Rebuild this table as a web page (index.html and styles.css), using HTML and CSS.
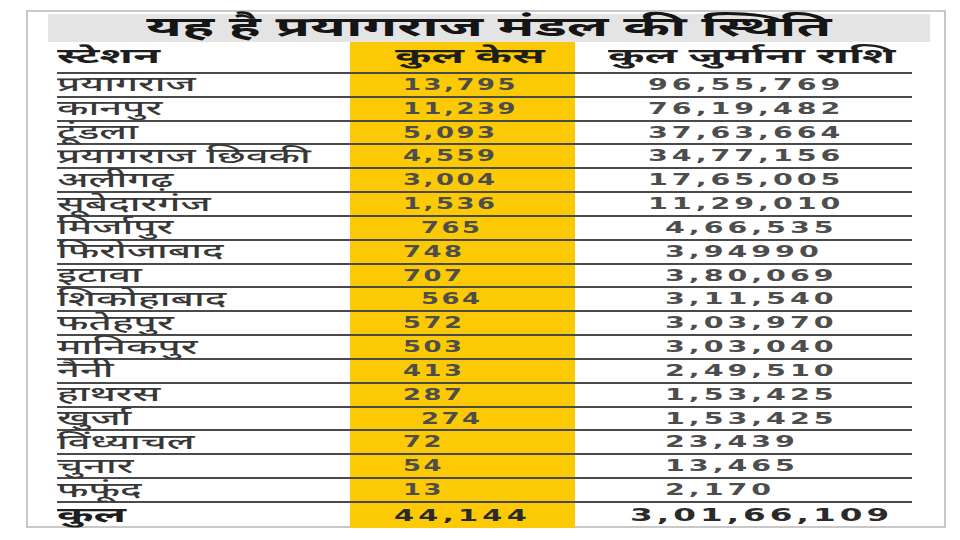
FILE: index.html
```html
<!DOCTYPE html>
<html lang="hi">
<head>
<meta charset="utf-8">
<title>प्रयागराज मंडल की स्थिति</title>
<link rel="stylesheet" href="styles.css">
</head>
<body>
<div class="frame">
  <div class="title"><span>यह है प्रयागराज मंडल की स्थिति</span></div>
  <div class="table">
    <div class="row head">
      <div class="c1"><span>स्टेशन</span></div>
      <div class="c2"><span>कुल केस</span></div>
      <div class="c3"><span>कुल जुर्माना राशि</span></div>
    </div>
    <div class="row"><div class="c1"><span>प्रयागराज</span></div><div class="c2"><span>13,795</span></div><div class="c3 wide"><span>96,55,769</span></div></div>
    <div class="row"><div class="c1"><span>कानपुर</span></div><div class="c2"><span>11,239</span></div><div class="c3 wide"><span>76,19,482</span></div></div>
    <div class="row"><div class="c1"><span>टूंडला</span></div><div class="c2"><span>5,093</span></div><div class="c3 wide"><span>37,63,664</span></div></div>
    <div class="row"><div class="c1"><span>प्रयागराज छिवकी</span></div><div class="c2"><span>4,559</span></div><div class="c3 wide"><span>34,77,156</span></div></div>
    <div class="row"><div class="c1"><span>अलीगढ़</span></div><div class="c2"><span>3,004</span></div><div class="c3 wide"><span>17,65,005</span></div></div>
    <div class="row"><div class="c1"><span>सूबेदारगंज</span></div><div class="c2"><span>1,536</span></div><div class="c3 wide"><span>11,29,010</span></div></div>
    <div class="row"><div class="c1"><span>मिर्जापुर</span></div><div class="c2 ind"><span>765</span></div><div class="c3"><span>4,66,535</span></div></div>
    <div class="row"><div class="c1"><span>फिरोजाबाद</span></div><div class="c2"><span>748</span></div><div class="c3"><span>3,94990</span></div></div>
    <div class="row"><div class="c1"><span>इटावा</span></div><div class="c2"><span>707</span></div><div class="c3"><span>3,80,069</span></div></div>
    <div class="row"><div class="c1"><span>शिकोहाबाद</span></div><div class="c2 ind"><span>564</span></div><div class="c3"><span>3,11,540</span></div></div>
    <div class="row"><div class="c1"><span>फतेहपुर</span></div><div class="c2"><span>572</span></div><div class="c3"><span>3,03,970</span></div></div>
    <div class="row"><div class="c1"><span>मानिकपुर</span></div><div class="c2"><span>503</span></div><div class="c3"><span>3,03,040</span></div></div>
    <div class="row"><div class="c1"><span>नैनी</span></div><div class="c2"><span>413</span></div><div class="c3"><span>2,49,510</span></div></div>
    <div class="row"><div class="c1"><span>हाथरस</span></div><div class="c2"><span>287</span></div><div class="c3"><span>1,53,425</span></div></div>
    <div class="row"><div class="c1"><span>खुर्जा</span></div><div class="c2 ind"><span>274</span></div><div class="c3"><span>1,53,425</span></div></div>
    <div class="row"><div class="c1"><span>विंध्याचल</span></div><div class="c2"><span>72</span></div><div class="c3"><span>23,439</span></div></div>
    <div class="row"><div class="c1"><span>चुनार</span></div><div class="c2"><span>54</span></div><div class="c3"><span>13,465</span></div></div>
    <div class="row"><div class="c1"><span>फफूंद</span></div><div class="c2"><span>13</span></div><div class="c3"><span>2,170</span></div></div>
    <div class="row total"><div class="c1"><span>कुल</span></div><div class="c2"><span>44,144</span></div><div class="c3"><span>3,01,66,109</span></div></div>
  </div>
</div>
</body>
</html>
```

FILE: styles.css
```css
* { box-sizing: border-box; }
html, body { margin: 0; padding: 0; background: #ffffff; }
body {
  font-family: "Noto Sans Devanagari", "Lohit Devanagari", "FreeSans", "Noto Sans", "DejaVu Sans", sans-serif;
  color: #3a3a3a;
}
.frame {
  margin: 10px 0 0 26px;
  width: 920px;
  height: 518px;
  border: 2px solid #c8c8c8;
  padding: 2px 14px 0 20px;
  display: flex;
  flex-direction: column;
}
.title {
  height: 28px;
  background: #e4e4e4;
  display: flex;
  justify-content: center;
  align-items: center;
  font-size: 27px;
  font-weight: 700;
  color: #151515;
  white-space: nowrap;
}
.title span {
  display: inline-block;
  line-height: 28px;
  padding-top: 3px;
  transform: scaleX(2.09);
  transform-origin: center center;
}
.table {
  margin-left: 9px;
  width: 855px;
  flex: 1;
  display: flex;
  flex-direction: column;
}
.row {
  display: flex;
  height: 23.83px;
  border-bottom: 2px solid #4a4a4a;
  font-size: 20px;
  line-height: 21px;
}
.row > div { display: flex; align-items: center; white-space: nowrap; }
.row span {
  display: inline-block;
  transform-origin: left center;
}
.c1 { width: 293px; padding-top: 4px; font-weight: 500; }
.c1 span { transform: scaleX(2.0); color: #383838; }
.c2 {
  width: 225px;
  background: #fbca04;
  padding-left: 53px;
}
.c3 { width: 337px; padding-left: 90px; }
.c2, .c3 {
  font-family: "DejaVu Sans", "Verdana", sans-serif;
  font-size: 15px;
  font-weight: 700;
  color: #4d4d4d;
  padding-top: 1px;
}
.c2 span { transform: scaleX(1.72); letter-spacing: 1.5px; }
.c3 span { transform: scaleX(1.9); letter-spacing: 2.1px; }
.c3.wide { padding-left: 73px; }
.c2.ind { padding-left: 71px; }
.head { height: 32px; }
.head > div {
  font-family: "Noto Sans Devanagari", "Lohit Devanagari", "FreeSans", "Noto Sans", sans-serif;
  font-size: 21px;
  font-weight: 700;
  color: #1e1e1e;
  padding-top: 3px;
}
.head span { transform: scaleX(2.1) !important; letter-spacing: 0 !important; color: #1e1e1e !important; }
.head .c2 { padding-left: 45px; }
.head .c3 { padding-left: 33px; }
.total { flex: 1; border-bottom: none; }
.total > div { color: #1e1e1e; }
.total .c1 { font-weight: 700; font-size: 21px; }
.total .c1 span { transform: scaleX(2.1); color: #1e1e1e; }
.total .c2 { padding-left: 44px; color: #2a2a2a; font-size: 16px; }
.total .c2 span { transform: scaleX(1.8); letter-spacing: 2.4px; }
.total .c3 { padding-left: 55px; color: #2a2a2a; font-size: 17px; }
.total .c3 span { transform: scaleX(1.92); letter-spacing: 2.1px; }
```
